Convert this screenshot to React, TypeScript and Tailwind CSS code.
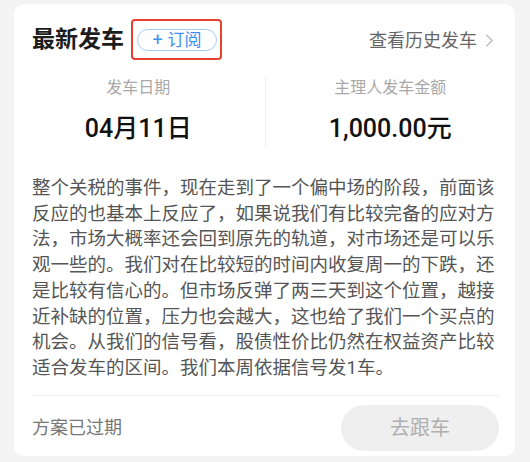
import React from "react";

const FONT = { fontFamily: 'Roboto, "Noto Sans CJK SC", sans-serif' };

const body =
  "整个关税的事件，现在走到了一个偏中场的阶段，前面该反应的也基本上反应了，如果说我们有比较完备的应对方法，市场大概率还会回到原先的轨道，对市场还是可以乐观一些的。我们对在比较短的时间内收复周一的下跌，还是比较有信心的。但市场反弹了两三天到这个位置，越接近补缺的位置，压力也会越大，这也给了我们一个买点的机会。从我们的信号看，股债性价比仍然在权益资产比较适合发车的区间。我们本周依据信号发1车。";

function Chevron() {
  return (
    <svg viewBox="0 0 8 14" className="h-[13px] w-[7px]" fill="none" stroke="#b5b5b5" strokeWidth="1.4">
      <path d="M1 1l6 6-6 6" strokeLinecap="round" strokeLinejoin="round" />
    </svg>
  );
}

export default function App() {
  return (
    <div className="h-[462px] w-[530px] bg-[#f4f4f4] pt-[4px] pl-[14px]" style={FONT}>
      <div className="relative flex h-[452px] w-[501px] flex-col rounded-[10px] bg-white pl-[18px] pr-[16px]">
        {/* header */}
        <div className="mt-[16px] flex h-[40px] items-center justify-between">
          <div className="flex items-center">
            <span className="text-[23px] font-bold text-[#1d1d1d]">最新发车</span>
            <span className="ml-[13px] flex h-[22px] w-[80px] items-center justify-center gap-[5px] rounded-full border border-[#a9cdf6] text-[17px] leading-none text-[#3f8ef0]">
              <span className="text-[18px]">+</span>
              <span>订阅</span>
            </span>
          </div>
          <div className="flex items-center gap-[9px] pr-[6px]">
            <span className="text-[18px] text-[#666]">查看历史发车</span>
            <Chevron />
          </div>
        </div>

        {/* annotation box */}
        <div className="pointer-events-none absolute left-[117px] top-[15px] h-[41px] w-[91px] rounded-[4px] border-2 border-[#e5412e]" />

        {/* stats */}
        <div className="-ml-[18px] -mr-[16px] mt-[17px] grid grid-cols-2">
          <div className="flex flex-col items-center pb-[4px] pr-[2px]">
            <span className="text-[16px] leading-[22px] text-[#a8a8a8]">发车日期</span>
            <span className="mt-[14px] text-[25px] font-medium leading-[32px] text-[#111]">04月11日</span>
          </div>
          <div className="flex flex-col items-center border-l border-[#f0f0f0] pb-[4px]">
            <span className="text-[16px] leading-[22px] text-[#a8a8a8]">主理人发车金额</span>
            <span className="mt-[14px] text-[25px] font-medium leading-[32px] text-[#111]">1,000.00元</span>
          </div>
        </div>

        {/* body */}
        <p className="mt-[27px] text-[18.5px] leading-[25.7px] text-[#555]">{body}</p>

        {/* footer */}
        <div className="mt-[13px] border-t border-[#f1f1f1]" />
        <div className="mt-[9px] flex items-center justify-between">
          <span className="text-[18px] text-[#777]">方案已过期</span>
          <button className="h-[46px] w-[158px] rounded-full bg-[#efefef] text-[20px] text-[#b0b0b0]">去跟车</button>
        </div>
      </div>
    </div>
  );
}
